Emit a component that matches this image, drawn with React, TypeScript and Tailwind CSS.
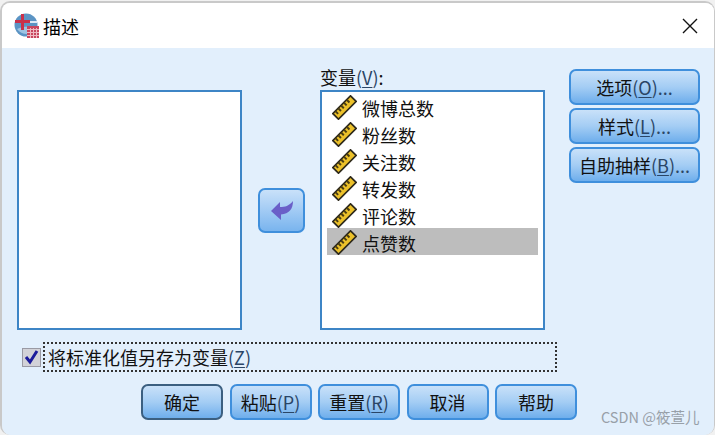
const font = { fontFamily: '"Noto Sans CJK SC", "Liberation Sans", sans-serif' };

function RulerIcon() {
  return (
    <svg width="25" height="25" viewBox="0 0 25 25" className="flex-none mt-[1px]">
      <g transform="rotate(-45 12.5 12.5)">
        <rect x="0" y="8.5" width="25" height="8" fill="#ecc12a" stroke="#2e2a1c" strokeWidth="1.7" />
        <path d="M3.5 9v3.5M7.5 9v3.5M11.5 9v3.5M15.5 9v3.5M19.5 9v3.5" stroke="#4a3d12" strokeWidth="2" />
      </g>
    </svg>
  );
}

function Logo() {
  return (
    <svg width="25" height="25" viewBox="0 0 25 25" className="flex-none">
      <circle cx="12" cy="12" r="11.5" fill="#5b94c4" />
      <path d="M3 16c5-3 12-3 19-2v3c-5 5-14 6-19-1z" fill="#9cc3e2" />
      <rect x="14" y="8" width="9" height="2" fill="#dbe9f5" />
      <path d="M7 1h3v6h6v3h-6v7H7v-7H1V7h6z" fill="#c9304a" />
      <rect x="13" y="13" width="12" height="12" fill="#c8475f" />
      <path d="M13 16.5h12M13 19.5h12M13 22.5h12M16.5 15v10M19.5 15v10M22.5 15v10" stroke="#eeb9c2" strokeWidth="1" />
    </svg>
  );
}

function Hot({ children }: { children: string }) {
  return <span className="text-[#2a4566]">({<span className="underline underline-offset-2">{children}</span>})</span>;
}

function Btn({ label, hot, dots, w, def }: { label: string; hot?: string; dots?: boolean; w: string; def?: boolean }) {
  return (
    <button
      className={`${w} h-[36px] flex-none rounded-[7px] border-2 ${def ? "border-[#3b5f80]" : "border-[#3f8fdc]"} bg-gradient-to-b from-[#c9e1f9] via-[#a4cdf4] to-[#6eaeec] text-[18px] leading-none text-[#111] flex items-center justify-center whitespace-nowrap`}
    >
      {label}
      {hot && <Hot>{hot}</Hot>}
      {dots && <span className="text-[#2a4566]">...</span>}
    </button>
  );
}

const vars = ["微博总数", "粉丝数", "关注数", "转发数", "评论数", "点赞数"];

export default function App() {
  return (
    <div className="w-[715px] h-[435px] overflow-hidden bg-[#f1f1f1] pt-[1px]" style={font}>
      <div className="h-[434px] rounded-[10px] border-2 border-[#c9c9c9] border-b-0 border-r-[1px] overflow-hidden flex flex-col">
        <div className="h-[45px] flex-none bg-white flex items-center pl-[12px] pr-[15px]">
          <Logo />
          <span className="ml-[4px] text-[18px] leading-none text-black">描述</span>
          <svg width="18" height="18" viewBox="0 0 18 18" className="ml-auto">
            <path d="M2 2l14 14M16 2L2 16" stroke="#111" strokeWidth="1.4" />
          </svg>
        </div>

        <div className="flex-1 bg-[#e2effc] relative">
          <div className="flex items-start pl-[15px] pt-[21px]">
            <div className="w-[225px] h-[240px] mt-[21px] flex-none bg-white border-2 border-[#3d85c6]" />

            <div className="w-[47px] h-[45px] mt-[119px] ml-[16px] flex-none rounded-[7px] border-2 border-[#3f8fdc] bg-gradient-to-b from-[#c9e1f9] to-[#79b4ee] flex items-center justify-center">
              <svg width="22" height="19" viewBox="0 0 22 19">
                <path d="M0 10L9 1V6C14 6 18 5 22 0C22 8 18 13 10 13.5V19Z" fill="#6a5fc8" />
              </svg>
            </div>

            <div className="ml-[15px] w-[225px] flex-none">
              <div className="h-[21px] text-[18px] leading-[17px] text-[#111] whitespace-nowrap">
                变量<Hot>V</Hot>:
              </div>
              <div className="h-[240px] bg-white border-2 border-[#3d85c6] pt-[1px] pl-[5px]">
                {vars.map((v, i) => (
                  <div
                    key={v}
                    className={`w-[211px] h-[27px] flex items-center pl-[5px] gap-[5px] text-[18px] leading-none text-[#111] ${i === 5 ? "bg-[#bdbdbd]" : ""}`}
                  >
                    <RulerIcon />
                    <span className="pt-[3px]">{v}</span>
                  </div>
                ))}
              </div>
            </div>

            <div className="ml-[24px] flex flex-col gap-[3px]">
              <Btn w="w-[131px]" label="选项" hot="O" dots />
              <Btn w="w-[131px]" label="样式" hot="L" dots />
              <Btn w="w-[131px]" label="自助抽样" hot="B" dots />
            </div>
          </div>

          <div className="flex items-center pl-[20px] mt-[12px]">
            <div className="w-[19px] h-[19px] flex-none bg-[#d2d2d8] border border-[#9a9aa4] flex items-center justify-center">
              <svg width="17" height="17" viewBox="0 0 17 17">
                <path d="M3 8l4 5 7-11" fill="none" stroke="#1c1c9c" strokeWidth="3" />
              </svg>
            </div>
            <div className="ml-[2px] w-[514px] h-[30px] border-2 border-dotted border-[#333] pl-[3px] text-[18px] leading-[26px] text-[#111] whitespace-nowrap">
              将标准化值另存为变量<Hot>Z</Hot>
            </div>
          </div>

          <div className="flex pl-[139px] gap-[6.5px] mt-[12px]">
            <Btn w="w-[82px]" label="确定" def />
            <Btn w="w-[82px]" label="粘贴" hot="P" />
            <Btn w="w-[82px]" label="重置" hot="R" />
            <Btn w="w-[82px]" label="取消" />
            <Btn w="w-[82px]" label="帮助" />
          </div>

          <div className="absolute left-[599px] top-[362px] text-[14.5px] leading-none text-[#98a0a8] whitespace-nowrap">CSDN @筱萱儿</div>
        </div>
      </div>
    </div>
  );
}
